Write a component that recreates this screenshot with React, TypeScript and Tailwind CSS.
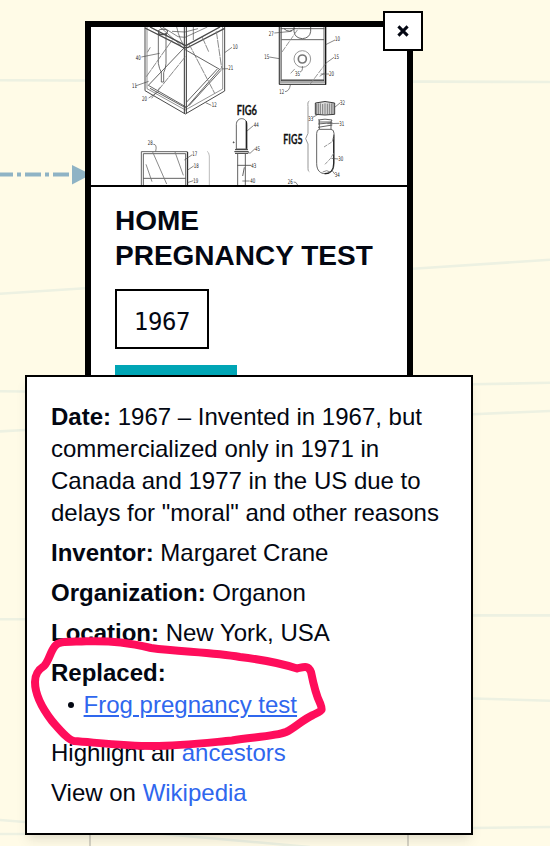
import type { ReactNode } from "react";

type Label = [number, number, string];

const LABELS: Label[] = [
  [458, 146, "10"], [445, 210, "21"], [167, 179, "40"], [156, 263, "11"], [186, 302, "20"], [395, 321, "12"],
  [203, 436, "28"], [337, 467, "17"], [341, 504, "18"], [340, 548, "19"], [521, 382, "44"], [525, 453, "45"],
  [514, 504, "43"], [511, 549, "40"], [566, 107, "27"], [765, 124, "10"], [553, 177, "15"], [762, 177, "15"],
  [645, 227, "35"], [747, 228, "20"], [598, 281, "12"], [780, 316, "32"], [685, 363, "33"], [778, 377, "31"],
  [775, 484, "30"], [764, 530, "34"], [623, 552, "26"],
];

function PatentDrawing() {
  return (
    <svg viewBox="33 81 948 474" className="block h-[158px] w-full bg-white" fill="none" stroke="#4a4a4a" strokeWidth="2.6">
      {/* box in perspective */}
      <g>
        <path d="M195 81V272L316 342L434 273V81" strokeWidth="3" />
        <path d="M201 81V266L316 330L428 267V81" strokeWidth="1.8" />
        <path d="M313 81V340M319 81V340" strokeWidth="3" stroke="#333" />
        <path d="M195 84L300 137Q316 149 332 138L434 85M210 81L304 130Q316 142 330 130L420 81" strokeWidth="4" />
        <path d="M240 81L304 137M248 81L294 110L315 112L382 81M340 81V120M290 81Q300 125 316 140M276 94L315 96L354 86" strokeWidth="2" />
        <path d="M235 100V190Q238 208 244 217V246H251V218Q257 207 258 190V100Q247 108 235 100" strokeWidth="2.4" />
        <path d="M235 92Q248 82 263 92L259 104H237Z" strokeWidth="3" />
        <path d="M205 256L312 144M205 256L320 322L419 208L314 148M210 265L318 324M327 317L423 211M412 207L320 306" />
        <path d="M199 230L278 118M233 273L316 170M326 130L404 280M366 110L386 155M409 94L425 204M202 157L211 142M215 295L240 262" stroke="#777" strokeDasharray="24 2" />
        <path d="M456 142L434 158M420 207L444 206M184 171L239 160M166 258L206 244M206 294L237 274M394 316L377 308" strokeWidth="2" />
      </g>
      {/* open container */}
      <g>
        <path d="M184 555V455H322V555M190 555V461H317V555M190 535H317" />
        <path d="M323 456V555" stroke="#222" strokeWidth="3" />
        <path d="M218 456L260 552M285 456L310 526M198 493L216 545" stroke="#777" />
        <path d="M220 433Q232 432 227 454M337 464L313 480M341 498L323 510M340 542L322 548" strokeWidth="2" />
        <path d="M381 454Q387 456 388 468V555" stroke="#999" strokeWidth="2" />
      </g>
      {/* dropper */}
      <g>
        <path d="M469 447V374C469 350 501 350 501 374V447Z" />
        <path d="M499 364V446" stroke="#222" strokeWidth="4" />
        <path d="M465 449H504M463 455H506M465 460H505" stroke="#333" strokeWidth="3" />
        <path d="M473 462V555M496 462V555M472 496H514M488 528L493 502" />
        <path d="M520 377L501 393M525 446L510 460L502 455M509 543L487 543" strokeWidth="2" />
        <circle cx="461" cy="427" r="1.5" fill="#333" />
      </g>
      {/* case with round window */}
      <g>
        <path d="M598 81V253H737V81M604 81V246H732V81M603 119H732M603 240H732" />
        <path d="M601 81V250M602 246H737" stroke="#aaa" strokeWidth="6" />
        <path d="M598 81V253H737M603 241H732" stroke="#333" strokeWidth="2.5" />
        <path d="M737 81V254" stroke="#111" strokeWidth="3.5" />
        <path d="M602 86H733M642 81V94Q644 114 667 116Q690 114 692 94V81M612 86Q628 102 645 84" />
        <circle cx="667" cy="177" r="25" stroke="#888" />
        <circle cx="667" cy="177" r="12" stroke="#777" strokeWidth="5" />
        <path d="M690 253L736 192M606 156L657 83M719 229L735 218M632 220L646 205" stroke="#888" strokeDasharray="18 3" />
        <path d="M583 99L635 94M765 120L737 134M568 171L598 176M762 172L737 190M660 216Q669 214 667 198M747 222L722 222M615 275Q628 274 631 255" strokeWidth="2" />
      </g>
      {/* vial and screw cap */}
      <g>
        <path d="M706 309Q735 300 764 309V343Q735 347 706 343Z" fill="#ddd" stroke="#222" />
        <path d="M710 311V342M715 310V342M721 310V343M728 312V343M735 310V343M742 311V343M748 310V343M754 310V342M759 309V342" strokeWidth="2" />
        <path d="M714 360Q735 355 756 360L753 366H715M714 372L757 368M714 382L757 375M718 360V388Q710 389 710 400V490C710 513 722 521 736 521C753 521 762 511 762 490V400Q762 389 753 388V365M718 388H753" />
        <path d="M761 405V490C761 510 750 521 734 521" stroke="#222" strokeWidth="3.5" />
        <path d="M732 441L757 425L762 402M735 493L751 476L762 458" stroke="#888" strokeDasharray="12 3" />
        <path d="M728 516L740 512L750 516" stroke="#777" />
        <path d="M688 303Q682 305 684 320V400L677 416L684 432V505Q683 513 688 515" stroke="#888" />
        <path d="M781 308L764 322M698 352L713 344M778 370L742 371M775 477L754 475M765 523L755 510M641 546Q648 544 653 555" strokeWidth="2" />
      </g>
      <g fill="#222" stroke="none" className="font-['DejaVu_Sans_Condensed','DejaVu_Sans',sans-serif] text-[19px]">
        {LABELS.map(([x, y, label], i) => (
          <text key={i} x={x} y={y} textLength="15" lengthAdjust="spacingAndGlyphs">{label}</text>
        ))}
      </g>
      <g fill="#111" stroke="#111" strokeWidth="0.8" className="font-['Lato',sans-serif] text-[38px] font-bold">
        <text x="470" y="346" textLength="61" lengthAdjust="spacingAndGlyphs">FIG6</text>
        <text x="610" y="433" textLength="58" lengthAdjust="spacingAndGlyphs">FIG5</text>
      </g>
    </svg>
  );
}

function Connections() {
  return (
    <svg viewBox="0 0 550 846" className="absolute inset-0 h-full w-full" fill="none">
      <g stroke="#edf1e2" strokeWidth="2.6">
        <path d="M0 80.3L550 82M0 293.7L85 288.3M413 268.8L550 259.8M0 391.2L25 391.5M473 384.3L550 382.8" />
        <path d="M0 431.4L25 430M0 619.3H25M473 414.2L550 411M473 615.4H550M473 698.5L550 700.7M473 828L550 827" />
        <path d="M0 820L25 822M0 834H25M140 832L310 847" />
      </g>
      <path d="M-3 174.4H70" stroke="#8fb3c5" strokeWidth="4" strokeDasharray="16 4 4 4" />
      <path d="M72 165L91 174.5L72 184.5Z" fill="#8fb3c5" />
    </svg>
  );
}

function Field({ name, children }: { name: string; children?: ReactNode }) {
  return (
    <p>
      <strong className="font-bold">{name}:</strong> {children}
    </p>
  );
}

export default function App() {
  return (
    <main className="relative h-[846px] w-[550px] overflow-hidden bg-[#fffbe7] font-['Liberation_Sans',Arial,sans-serif] text-[#030712]">
      <Connections />
      <div className="absolute top-[700px] left-[89px] h-[180px] w-[320px] border-2 border-[#d6d3c4]" />

      <article className="absolute top-[21px] left-[85px] h-[360px] w-[328px] overflow-hidden border-[6px] border-black bg-white">
        <div className="border-b-2 border-black">
          <PatentDrawing />
        </div>
        <div className="flex flex-col items-start px-6 pt-4">
          <h1 className="text-[28px] leading-[35px] font-bold">
            HOME
            <br />
            PREGNANCY TEST
          </h1>
          <div className="mt-4 flex h-[60px] w-[94px] justify-center border-2 border-black pt-[15px] font-['DejaVu_Sans_Mono',monospace] text-2xl leading-8 tracking-[-0.35px]">
            1967
          </div>
          <div className="mt-4 h-10 w-[122px] bg-[#00a5b5]" />
        </div>
      </article>

      <button
        aria-label="Close"
        className="absolute top-[11px] left-[383px] flex size-10 items-center justify-center border-2 border-black bg-white"
      >
        <svg viewBox="0 0 12 12" className="size-3" stroke="#030712" strokeWidth="3">
          <path d="M1.4 1.4L10.6 10.6M10.6 1.4L1.4 10.6" />
        </svg>
      </button>

      <section className="absolute top-[375px] left-[25px] flex h-[460px] w-[448px] flex-col gap-2 border-2 border-black bg-white p-6 text-2xl leading-8 shadow-[0_8px_12px_-2px_rgba(0,0,0,0.08),0_4px_8px_-4px_rgba(0,0,0,0.08)]">
        <Field name="Date">
          1967 – Invented in 1967, but commercialized only in 1971 in Canada and 1977 in the US due to delays for "moral" and other reasons
        </Field>
        <Field name="Inventor">Margaret Crane</Field>
        <Field name="Organization">Organon</Field>
        <Field name="Location">New York, USA</Field>
        <div className="mb-2">
          <Field name="Replaced" />
          <ul>
            <li className="flex items-center pl-[17px]">
              <span className="mr-[9.6px] size-[6px] rounded-full bg-[#030712]" />
              <a className="text-[#2f67ee] underline">Frog pregnancy test</a>
            </li>
          </ul>
        </div>
        <p>
          Highlight all <a className="text-[#2f67ee]">ancestors</a>
        </p>
        <p>
          View on <a className="text-[#2f67ee]">Wikipedia</a>
        </p>
      </section>

      <svg viewBox="0 0 550 846" className="pointer-events-none absolute inset-0 h-full w-full" fill="none">
        <path
          d="M35 682C35 674 38 670 44 666C49 661 50 652 55 646C59 641 66 642 86 641.3C113 640.5 130 643 151 648C180 652 212 652 240 657C265 660 280 663 297 668.5C304 667 308 665 311 672C313 682 316 695 320 703C323 711 323 710 313 715C302 720 295 728 286 732C276 736 255 737 232 740.5C205 743 180 746 153 746C125 746 100 743 74 741C68 740 60 730 52 721C42 708 35 694 35 682Z"
          stroke="#ff0d5b"
          strokeWidth="8"
          strokeLinejoin="round"
        />
      </svg>
    </main>
  );
}
